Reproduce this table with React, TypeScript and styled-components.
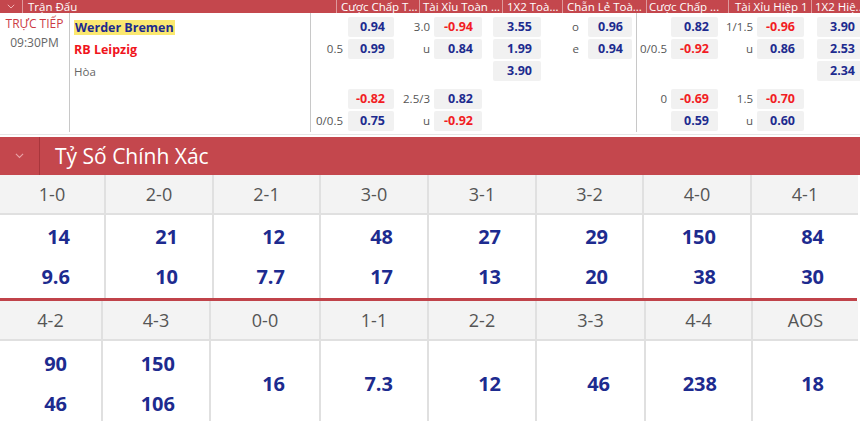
import styled, { createGlobalStyle } from "styled-components";

const RED = "#c4474d";
const NAVY = "#1d2b8f";
const ODD_RED = "#f21c24";

const GlobalStyle = createGlobalStyle`
  html, body {
    margin: 0;
    padding: 0;
    background: #fff;
  }
  body {
    font-family: "Open Sans", "Noto Sans", "Liberation Sans", sans-serif;
    overflow: hidden;
  }
`;

const Page = styled.div`
  width: 860px;
`;

// ---- top match strip ----

const TopHeader = styled.div`
  display: grid;
  grid-template-columns: 22px 314px 83px 83px 60px 84px 82px 83px 49px;
  height: 13px;
  background: ${RED};
  color: #fff;
  font-size: 11.5px;
  line-height: 13px;
`;

const HeadCell = styled.div<{ $pl?: number }>`
  padding-left: ${(p) => p.$pl ?? 4}px;
  border-left: 1px solid rgba(255, 255, 255, 0.45);
  white-space: nowrap;
  overflow: hidden;
`;

const ChevronCell = styled.div`
  display: flex;
  align-items: center;
  justify-content: center;
`;

const MatchBody = styled.div`
  display: flex;
  padding-bottom: 2px;
  border-bottom: 1px solid #e6e6e6;
`;

const TimeCol = styled.div`
  width: 69px;
  border-right: 1px solid #c8c8c8;
  padding-top: 1px;
  text-align: center;
  font-size: 12px;
  line-height: 19px;
`;

const Live = styled.div`
  color: #cc3b44;
`;

const Clock = styled.div`
  color: #666;
`;

const TeamCol = styled.div`
  width: 236px;
  padding-left: 4px;
  padding-top: 3px;
  border-right: 1px solid #c8c8c8;
`;

const TeamLine = styled.div<{ $tone: "home" | "away" | "draw" }>`
  height: 22px;
  display: flex;
  align-items: center;
  font-size: ${(p) => (p.$tone === "draw" ? "11.5px" : "12.5px")};
  font-weight: ${(p) => (p.$tone === "draw" ? 400 : 700)};
  color: ${(p) =>
    p.$tone === "home" ? NAVY : p.$tone === "away" ? "#f0141c" : "#666"};
`;

const Highlight = styled.span`
  background: #fbe870;
  padding: 0 1px;
  line-height: 15px;
`;

const OddsGroup = styled.div<{ $border?: boolean }>`
  padding-top: 3px;
  border-right: ${(p) => (p.$border ? "1px solid #c8c8c8" : "none")};
  overflow: hidden;
`;

const OddsLine = styled.div<{ $cols: string; $gap?: boolean }>`
  display: grid;
  grid-template-columns: ${(p) => p.$cols};
  height: 22px;
  margin-top: ${(p) => (p.$gap ? 6 : 0)}px;
`;

const Label = styled.div<{ $pr: number }>`
  text-align: right;
  padding-right: ${(p) => p.$pr}px;
  font-size: 11.5px;
  line-height: 22px;
  color: #555;
  white-space: nowrap;
`;

const OddBox = styled.div<{ $neg: boolean; $ml: number; $mr: number; $w?: number }>`
  margin: 1px ${(p) => p.$mr}px 1px ${(p) => p.$ml}px;
  ${(p) => (p.$w ? `width: ${p.$w}px;` : "")}
  height: 20px;
  box-sizing: border-box;
  background: #f1f1f1;
  border-radius: 2px;
  padding-right: 9px;
  text-align: right;
  font-size: 12.5px;
  font-weight: 700;
  line-height: 20px;
  color: ${(p) => (p.$neg ? ODD_RED : NAVY)};
`;

type ColSpec =
  | { kind: "label"; w: number; pr: number }
  | { kind: "odd"; w: number; ml: number; mr: number; bw?: number };

const group1: ColSpec[] = [
  { kind: "label", w: 36, pr: 4 },
  { kind: "odd", w: 48, ml: 1, mr: 1 },
  { kind: "label", w: 38, pr: 3 },
  { kind: "odd", w: 50, ml: 1, mr: 1 },
  { kind: "odd", w: 60, ml: 10, mr: 2 },
  { kind: "label", w: 44, pr: 8 },
  { kind: "odd", w: 49, ml: 1, mr: 4 },
];

const group2: ColSpec[] = [
  { kind: "label", w: 33, pr: 3 },
  { kind: "odd", w: 49, ml: 1, mr: 1 },
  { kind: "label", w: 38, pr: 4 },
  { kind: "odd", w: 49, ml: 0, mr: 2 },
  { kind: "odd", w: 54, ml: 11, mr: 0, bw: 47 },
];

const rows1: (string | null)[][] = [
  ["", "0.94", "3.0", "-0.94", "3.55", "o", "0.96"],
  ["0.5", "0.99", "u", "0.84", "1.99", "e", "0.94"],
  ["", null, "", null, "3.90", "", null],
  ["", "-0.82", "2.5/3", "0.82", null, "", null],
  ["0/0.5", "0.75", "u", "-0.92", null, "", null],
];

const rows2: (string | null)[][] = [
  ["", "0.82", "1/1.5", "-0.96", "3.90"],
  ["0/0.5", "-0.92", "u", "0.86", "2.53"],
  ["", null, "", null, "2.34"],
  ["0", "-0.69", "1.5", "-0.70", null],
  ["", "0.59", "u", "0.60", null],
];

const Chevron = ({ size, color }: { size: number; color: string }) => (
  <svg width={size} height={size * 0.6} viewBox="0 0 10 6">
    <path d="M1 1 L5 5 L9 1" fill="none" stroke={color} strokeWidth="1.2" />
  </svg>
);

const Odds = ({ spec, rows, border }: { spec: ColSpec[]; rows: (string | null)[][]; border?: boolean }) => {
  const cols = spec.map((c) => `${c.w}px`).join(" ");
  return (
    <OddsGroup $border={border}>
      {rows.map((row, ri) => (
        <OddsLine key={ri} $cols={cols} $gap={ri === 3}>
          {row.map((v, ci) => {
            const c = spec[ci];
            if (c.kind === "label") {
              return (
                <Label key={ci} $pr={c.pr}>
                  {v}
                </Label>
              );
            }
            if (v === null) return <div key={ci} />;
            return (
              <OddBox key={ci} $neg={v.startsWith("-")} $ml={c.ml} $mr={c.mr} $w={c.bw}>
                {v}
              </OddBox>
            );
          })}
        </OddsLine>
      ))}
    </OddsGroup>
  );
};

// ---- correct score section ----

const SectionBar = styled.div`
  display: flex;
  height: 38px;
  margin-top: 2px;
  background: ${RED};
`;

const SectionToggle = styled.div`
  width: 39px;
  border-right: 1px solid #a8363c;
  display: flex;
  align-items: center;
  justify-content: center;
`;

const SectionTitle = styled.div`
  padding-left: 15px;
  color: #fff;
  font-size: 21px;
  line-height: 38px;
`;

const ScoreBlock = styled.div<{ $cols: string; $valueH: number }>`
  display: grid;
  width: 858px;
  grid-template-columns: ${(p) => p.$cols};
  grid-template-rows: 38px ${(p) => p.$valueH}px;
  gap: 2px;
  background: #e0e0e0;
`;

const ScoreHead = styled.div`
  background: #f3f3f3;
  color: #555;
  font-size: 18px;
  line-height: 38px;
  text-align: center;
`;

const ScoreValues = styled.div`
  background: #fff;
  display: flex;
  flex-direction: column;
  justify-content: center;
  align-items: flex-end;
  padding-right: 34px;
  color: ${NAVY};
  font-size: 20px;
  font-weight: 700;
  line-height: 40px;
`;

const Divider = styled.div`
  width: 857px;
  height: 3px;
  background: #c0434a;
`;

const scores1: [string, string[]][] = [
  ["1-0", ["14", "9.6"]],
  ["2-0", ["21", "10"]],
  ["2-1", ["12", "7.7"]],
  ["3-0", ["48", "17"]],
  ["3-1", ["27", "13"]],
  ["3-2", ["29", "20"]],
  ["4-0", ["150", "38"]],
  ["4-1", ["84", "30"]],
];

const scores2: [string, string[]][] = [
  ["4-2", ["90", "46"]],
  ["4-3", ["150", "106"]],
  ["0-0", ["16"]],
  ["1-1", ["7.3"]],
  ["2-2", ["12"]],
  ["3-3", ["46"]],
  ["4-4", ["238"]],
  ["AOS", ["18"]],
];

const Scores = ({ data, cols, valueH }: { data: [string, string[]][]; cols: string; valueH: number }) => (
  <ScoreBlock $cols={cols} $valueH={valueH}>
    {data.map(([s]) => (
      <ScoreHead key={"h" + s}>{s}</ScoreHead>
    ))}
    {data.map(([s, vals]) => (
      <ScoreValues key={"v" + s}>
        {vals.map((v, i) => (
          <div key={i}>{v}</div>
        ))}
      </ScoreValues>
    ))}
  </ScoreBlock>
);

export default function App() {
  return (
    <Page>
      <GlobalStyle />
      <TopHeader>
        <ChevronCell>
          <Chevron size={8} color="#f2b9bb" />
        </ChevronCell>
        <HeadCell $pl={5}>Trận Đấu</HeadCell>
        <HeadCell>Cược Chấp T...</HeadCell>
        <HeadCell $pl={3}>Tài Xỉu Toàn ...</HeadCell>
        <HeadCell>1X2 Toà...</HeadCell>
        <HeadCell>Chẵn Lẻ Toà...</HeadCell>
        <HeadCell $pl={2}>Cược Chấp ...</HeadCell>
        <HeadCell $pl={6}>Tài Xỉu Hiệp 1</HeadCell>
        <HeadCell $pl={3}>1X2 Hiệ..</HeadCell>
      </TopHeader>
      <MatchBody>
        <TimeCol>
          <Live>TRỰC TIẾP</Live>
          <Clock>09:30PM</Clock>
        </TimeCol>
        <TeamCol>
          <TeamLine $tone="home">
            <Highlight>Werder Bremen</Highlight>
          </TeamLine>
          <TeamLine $tone="away">RB Leipzig</TeamLine>
          <TeamLine $tone="draw">Hòa</TeamLine>
        </TeamCol>
        <Odds spec={group1} rows={rows1} border />
        <Odds spec={group2} rows={rows2} />
      </MatchBody>
      <SectionBar>
        <SectionToggle>
          <Chevron size={9} color="#eaa3a7" />
        </SectionToggle>
        <SectionTitle>Tỷ Số Chính Xác</SectionTitle>
      </SectionBar>
      <Scores data={scores1} cols="104px 106px 105px 106px 106px 105px 106px 1fr" valueH={83} />
      <Divider />
      <Scores data={scores2} cols="101px 106px 108px 106px 106px 107px 105px 1fr" valueH={86} />
    </Page>
  );
}
